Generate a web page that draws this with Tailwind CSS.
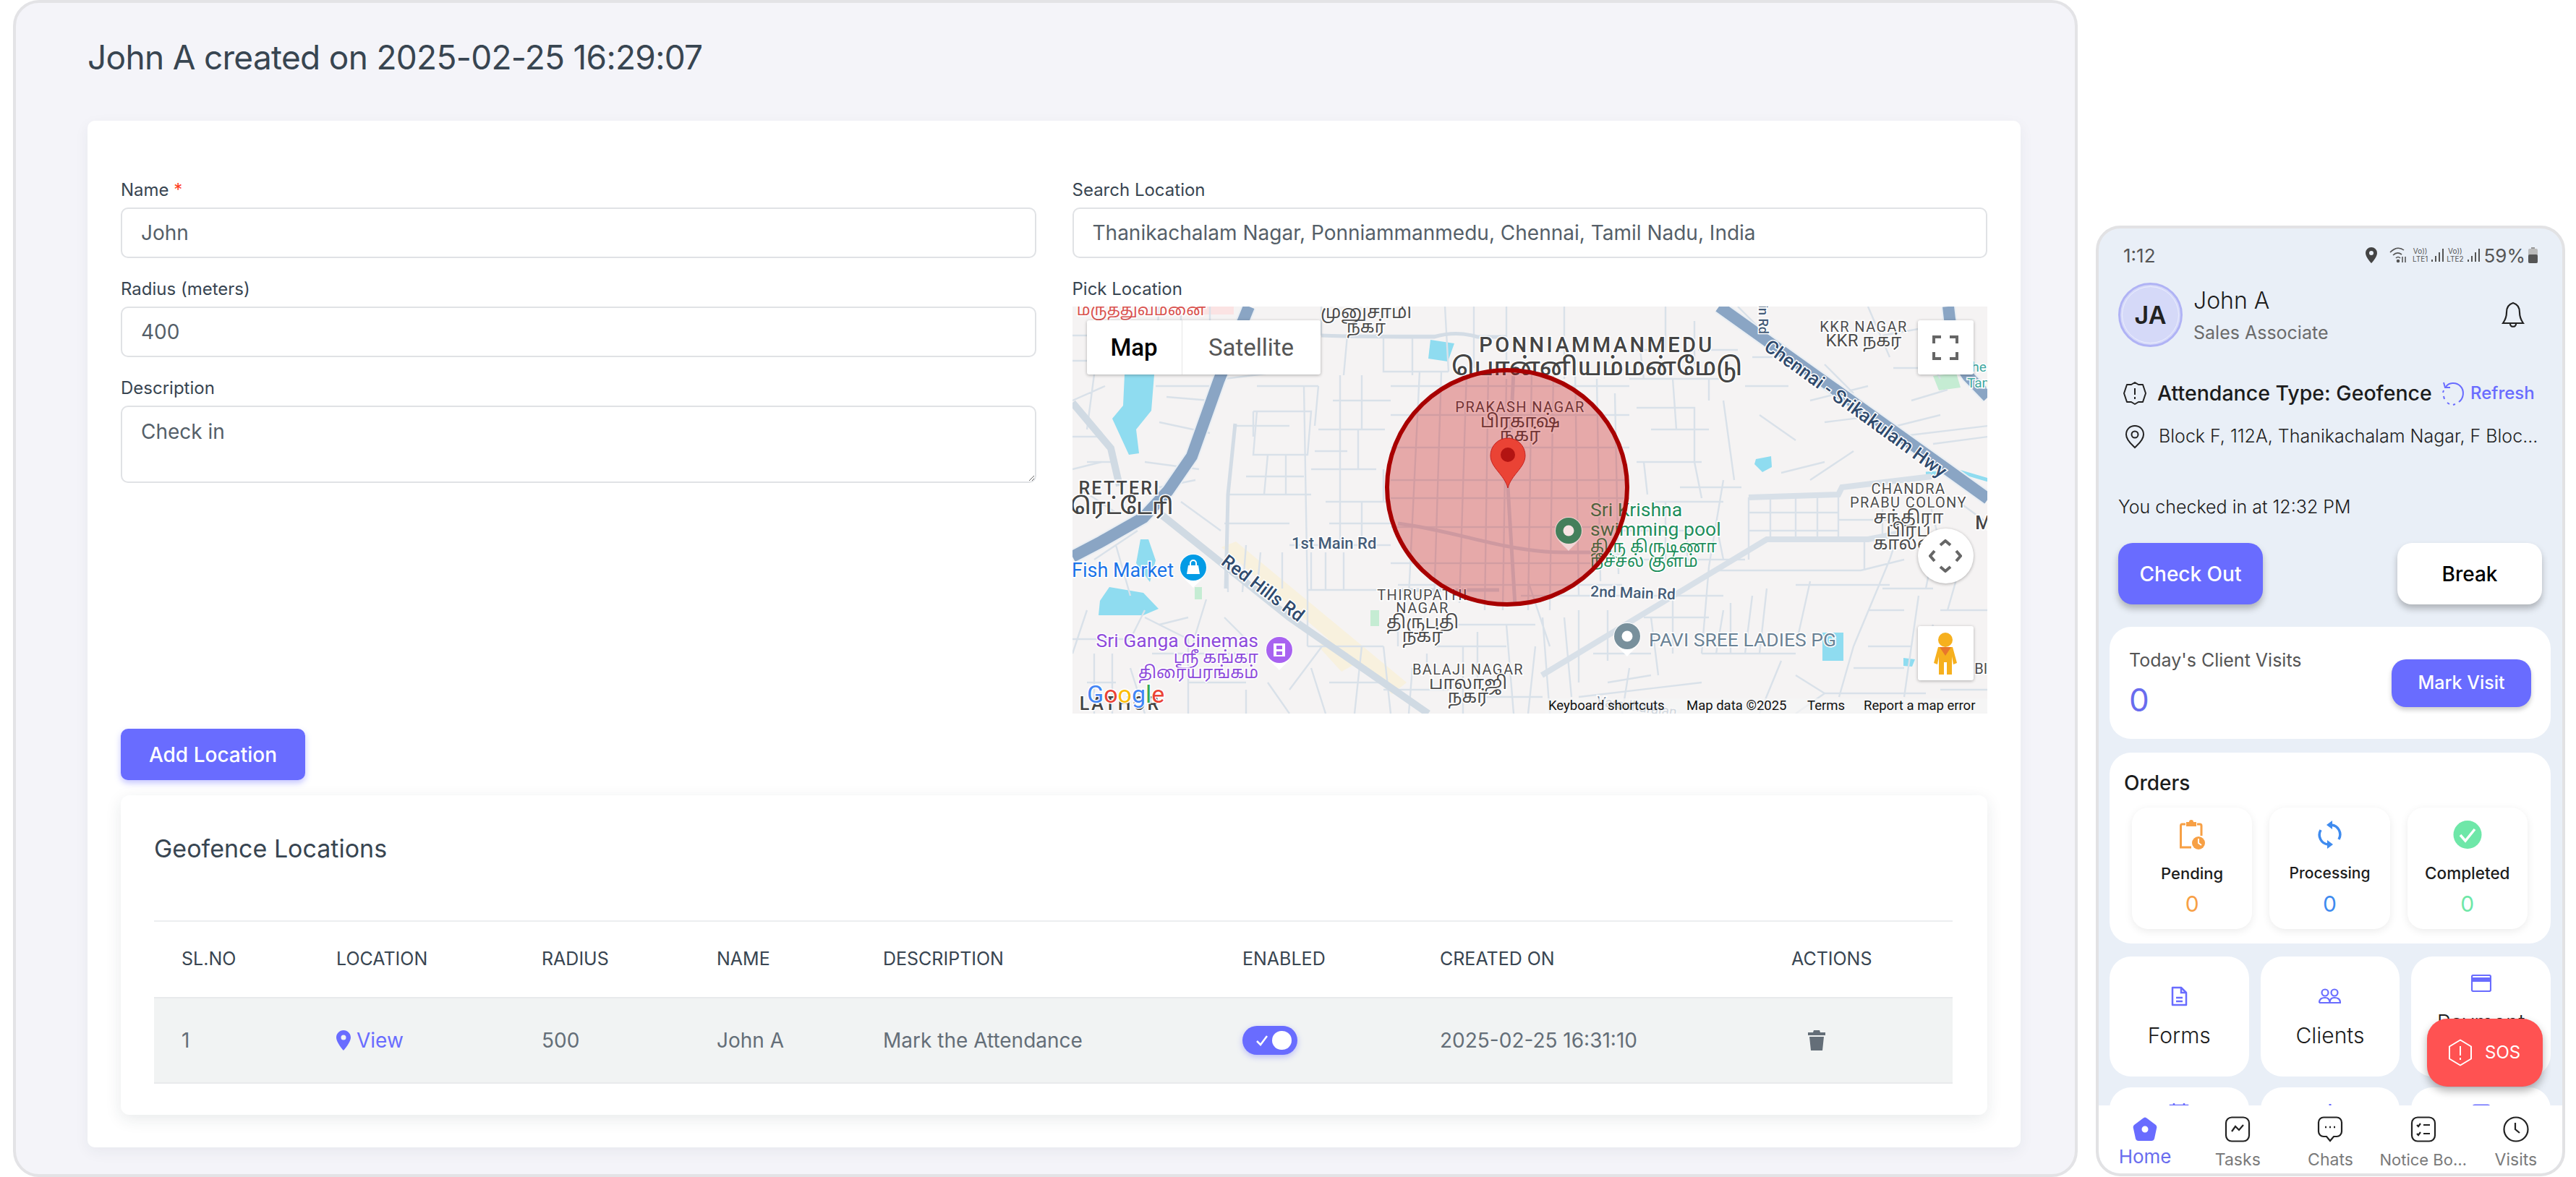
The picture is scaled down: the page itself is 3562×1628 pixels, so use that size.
<!DOCTYPE html>
<html lang="en">
<head>
<meta charset="UTF-8">
<title>Geofence Locations</title>
<script src="https://cdn.jsdelivr.net/npm/@tailwindcss/browser@4"></script>
</head>
<body class="bg-white">
<div class="flex w-[3562px] h-[1628px] overflow-hidden font-['Inter',sans-serif]">

  <!-- web panel -->
  <div class="ml-[18px] w-[2855px] h-[1628px] shrink-0 rounded-[36px] border-4 border-[#e3e3e6] bg-[#f4f4f9] pl-[99px] pr-[75px] text-[#384551]">
    <h1 class="h-[163px] pt-[46px] text-[46px] leading-[58px] font-normal tracking-[-0.7px]">John A created on 2025-02-25 16:29:07</h1>
    <div class="rounded-[10px] bg-white px-[46px] pt-[80px] pb-[45px] shadow-[0_6px_20px_rgba(34,48,62,0.06)]">
      <div class="grid grid-cols-2 gap-x-[50px]">
        <div>
          <label class="block h-[30px] pt-[1px] text-[24px] leading-[30px]">Name <span class="text-[#ff3e1d]">*</span></label>
          <div class="mt-[10px] h-[70px] rounded-[10px] border-2 border-[#e0e2e5] pl-[26px] text-[28px] leading-[66px] text-[#555f69]">John</div>
          <label class="block mt-[27px] h-[30px] pt-[1px] text-[24px] leading-[30px]">Radius (meters)</label>
          <div class="mt-[10px] h-[70px] rounded-[10px] border-2 border-[#e0e2e5] pl-[26px] text-[28px] leading-[66px] text-[#555f69]">400</div>
          <label class="block mt-[27px] h-[30px] pt-[1px] text-[24px] leading-[30px]">Description</label>
          <textarea class="block mt-[10px] w-full h-[107px] rounded-[10px] border-2 border-[#e0e2e5] pl-[26px] pt-[14px] text-[28px] leading-[40px] text-[#555f69]">Check in</textarea>
        </div>
        <div>
          <label class="block h-[30px] pt-[1px] text-[24px] leading-[30px]">Search Location</label>
          <div class="mt-[10px] h-[70px] rounded-[10px] border-2 border-[#e0e2e5] pl-[26px] text-[28px] leading-[66px] text-[#555f69]">Thanikachalam Nagar, Ponniammanmedu, Chennai, Tamil Nadu, India</div>
          <label class="block mt-[27px] h-[30px] pt-[1px] text-[24px] leading-[30px]">Pick Location</label>

          <!-- map -->
          <div class="relative mt-[10px] h-[563px] overflow-hidden bg-[#f5f3f3] font-['Roboto',sans-serif]">
            <svg class="absolute inset-0" width="1266" height="563" viewBox="0 0 1266 563" font-family="Roboto, 'Noto Sans', 'Noto Sans Tamil', sans-serif">
              <rect x="181" y="0" width="42" height="11" fill="#fbe3e3"/>
              <!-- water -->
              <g fill="#8fdcf0">
                <path d="M72 94H113L109 144 88 170 92 203 78 205 55 155 70 137Z"/>
                <path d="M38 407L51 388 98 396 119 418 98 427H36Z"/>
                <path d="M495 46L528 51 519 76 492 72Z"/>
                <path d="M945 211L966 207 967 222 954 229 943 218Z"/>
                <path d="M1037 451H1066V490H1037Z"/>
                <path d="M1149 486L1165 488 1161 498 1149 497Z"/>
                <path d="M94 322H105L115 351 107 381 88 355Z"/>
                <path d="M1180 231L1229 229 1266 240" fill="none" stroke="#8fdcf0" stroke-width="5"/>
              </g>
              <rect x="412" y="420" width="12" height="22" fill="#c5ecd3"/>
              <rect x="169" y="388" width="10" height="17" fill="#c5ecd3"/>
              <path d="M1190 96L1222 92 1228 112 1198 116Z" fill="#c5ecd3"/>
              <path d="M206 333L226 325 462 520 442 536Z" fill="#f8f1de"/>
              <path d="M340 470L362 455 395 492 372 505Z" fill="#f8f1de"/>
              <!-- small streets -->
              <path fill="none" stroke="#d9e1e9" stroke-width="2.4" d="M0 40H60M120 0L112 92M30 94L20 170M0 130L45 110M115 110H210M120 160L190 175M100 215L175 225M20 215H60M15 255L60 285M255 110H340M250 145H330L325 205H250L255 145M222 165H300M215 260H330M210 300H300M320 110L325 400M370 95V330M340 170H432M330 225H420M350 270H440M300 330H440M215 370V395M290 340V390M330 340V392M350 340V392M375 340V392M325 392H430M325 392V470M344 40H510M344 0V40M420 40L430 0M380 40L375 95M430 40V90H520M470 40V95M520 90L515 0M555 0V85M210 100L290 90M150 270L205 310M60 330L80 400M30 350L90 310M0 460H80L100 420M20 420L0 480M30 480V563M100 430L160 460V563M160 480H250M160 520H240M240 530V563M185 405L165 470M345 470L300 530M325 470H430M400 470L390 563M430 470L440 563M500 470H600M520 440H640M540 470V563M600 440L610 563M650 430L660 563M620 400H770M700 420V520M740 420V490M770 100H900M780 140H860V215M800 170H880M840 250H925M780 215H870M820 0V60M860 20V80M900 130L915 240M935 264V350M965 264V325M1000 262V322M1030 262V322M1059 260V320M935 285H1059M935 310H1059M900 240L880 360M800 270H900M760 310H880M770 350H930M800 400H900M880 360L870 480M890 365H1090M1090 365L1150 350M1020 380L1000 470M1000 385H1130M1130 350L1080 470M980 490L950 563M870 480H1000M1000 510L1040 535 1000 563M1040 535H1180M1080 470L1060 540M1120 390H1190M1170 400L1150 540M1200 420H1266M1020 130L1100 110M1140 180L1266 165M1190 190L1266 180M1170 45L1200 100M1040 80L1080 120M1080 200L1020 240M1100 0L1130 70M920 0L960 40M1120 40L1230 20M680 100V0M600 0V90M630 380L660 470M560 540H650M700 540L870 520M430 530H520M450 430V470M1120 280V320M1060 295H1160M1180 250L1200 330M1225 270L1266 300"/>
              <path fill="none" stroke="#d9e1e9" stroke-width="2.4" d="M0 75H50M40 50V90M130 40H235M150 0V40M190 0V40M130 75H210M130 125L190 130M0 180H45M0 225L40 215M120 250L170 240M250 180V145M270 205L265 260M295 205V260M240 235H320M340 110L335 165M400 95V170M395 170V225M430 225V270M400 270V330M360 130H440M335 200H380M355 300H440M240 330L235 395M260 340L255 395M210 430L240 460M120 440L160 430M110 480H155M55 480V563M80 500L100 563M20 520H60M270 520L300 563M330 500L350 563M355 520H430M470 500L465 563M490 480V500M560 450V520M640 470L630 563M680 430L690 540M720 480H800M770 500L760 563M800 430L810 510M830 400V480M790 430H880M740 520L800 510M900 420L890 480M910 410V480M940 400L930 480M960 390L950 480M780 60H820M790 100L785 60M830 100L835 170M865 60H920M880 100V130M940 70H980M930 110H990M950 150L1000 185M980 230L1040 215M790 215L795 260M860 215L870 265M890 300L900 350M820 270V350M850 310V350M1095 320V365M1140 320L1130 350M1190 340L1180 390M1230 350L1210 420M1100 420H1150M1100 470H1160M1080 500H1150M1190 440L1170 500M1200 530H1266M1135 85H1190M1160 130L1210 115M1120 170L1200 150M1040 160L1120 150"/>
              <path fill="none" stroke="#d9e1e9" stroke-width="2.4" d="M440 110H770M440 150H770M440 195H770M440 240H770M440 265H770M440 305H770M440 355H770M450 385H760M480 90L465 400M510 90L500 410M545 90L535 410M575 90L570 420M600 100L595 420M635 90L630 420M665 90L660 420M695 90L700 400M725 100L730 380M750 120L755 370"/>
              <path fill="none" stroke="#d3dce5" stroke-width="5" d="M225 162L215 260 212 390M344 40C400 42 470 42 500 42 520 36 540 36 560 42H600M610 90L602 250 612 414M450 300C530 310 600 340 680 340H760M450 392H590"/>
              <!-- main roads -->
              <path fill="none" stroke="#d0dae3" stroke-width="10" d="M123 288L300 430 492 563M0 133L53 196 65 248"/>
              <path fill="none" stroke="#d8e0e8" stroke-width="8" d="M649 510L960 322H1100L1146 313M935 264L1059 260 1064 250 1188 235"/>
              <g fill="none">
                <path stroke="#e9eef3" stroke-width="20" d="M244 0L202 103 165 207 132 255 98 292 40 325 0 346M894 0L1209 225 1266 266M1211 0C1215 40 1222 75 1238 96L1266 125"/>
                <path stroke="#8aa5c4" stroke-width="16" d="M244 0L202 103 165 207 132 255 98 292 40 325 0 346M894 0L1209 225 1266 266M1211 0C1215 40 1222 75 1238 96L1266 125"/>
              </g>
              <!-- labels -->
              <g text-anchor="middle" fill="#4d4d4d" stroke="#fff" stroke-width="3" paint-order="stroke" font-size="20" letter-spacing="1.4">
                <text x="95" y="12" fill="#d9534f" font-size="22" letter-spacing="0">மருத்துவமனை</text>
                <text x="406" y="16" font-size="25" letter-spacing="0">முனுசாமி</text>
                <text x="406" y="36" font-size="24" letter-spacing="0">நகர்</text>
                <text x="725" y="63" font-size="29" font-weight="500" letter-spacing="3.4" fill="#444">PONNIAMMANMEDU</text>
                <text x="725" y="95" font-size="34" font-weight="500" letter-spacing="0" fill="#444">பொன்னியம்மன்மேடு</text>
                <text x="619" y="146">PRAKASH NAGAR</text>
                <text x="619" y="167" font-size="25" letter-spacing="0">பிரகாஷ்</text>
                <text x="619" y="186" font-size="25" letter-spacing="0">நகர்</text>
                <text x="1094" y="35">KKR NAGAR</text>
                <text x="1094" y="55" font-size="24" letter-spacing="0">KKR நகர்</text>
                <text x="65" y="260" font-size="25" font-weight="500" letter-spacing="2.2" fill="#444">RETTERI</text>
                <text x="68" y="287" font-size="31" font-weight="500" letter-spacing="0" fill="#444">ரெட்டேரி</text>
                <text x="484" y="406">THIRUPATHI</text>
                <text x="484" y="424">NAGAR</text>
                <text x="484" y="445" font-size="25" letter-spacing="0">திருபதி</text>
                <text x="484" y="464" font-size="25" letter-spacing="0">நகர்</text>
                <text x="547" y="509">BALAJI NAGAR</text>
                <text x="547" y="529" font-size="25" letter-spacing="0">பாலாஜி</text>
                <text x="547" y="548" font-size="25" letter-spacing="0">நகர்</text>
                <text x="1156" y="259">CHANDRA</text>
                <text x="1156" y="278">PRABU COLONY</text>
                <text x="1156" y="300" font-size="25" letter-spacing="0">சந்திரா</text>
                <text x="1156" y="318" font-size="25" letter-spacing="0">பிரபு</text>
                <text x="1156" y="336" font-size="25" letter-spacing="0">காலனி</text>
                <text x="66" y="558" font-size="25" font-weight="500" letter-spacing="3" fill="#444">LATHOR</text>
                <text x="1260" y="308" font-size="25" font-weight="500" fill="#444">M</text>
                <text x="1262" y="508" letter-spacing="0">BIY</text>
              </g>
              <g fill="#445c78" stroke="#fff" stroke-width="3" paint-order="stroke" font-weight="500">
                <text x="303" y="335" font-size="22">1st Main Rd</text>
                <text x="716" y="401" font-size="21" transform="rotate(2 716 400)">2nd Main Rd</text>
                <text x="263" y="398" text-anchor="middle" font-size="25" fill="#2f4a6d" transform="rotate(37 263 390)">Red Hills Rd</text>
                <text x="1083" y="150" text-anchor="middle" font-size="26" fill="#2f4a6d" transform="rotate(36 1083 141)">Chennai - Srikakulam Hwy</text>
                <text x="999" y="44" text-anchor="start" font-size="18" transform="rotate(90 999 0) translate(-28 6)">Main Rd</text>
                <text x="724" y="552" font-size="19" fill="#7a8da3" font-weight="400" transform="rotate(8 724 552)">Varadharajan</text>
              </g>
              <g stroke="#fff" stroke-width="3" paint-order="stroke" font-size="27">
                <text x="-1" y="374" fill="#1a73e8">Fish Market</text>
                <text x="257" y="471" text-anchor="end" fill="#8e4bdb" font-size="26.5">Sri Ganga Cinemas</text>
                <text x="257" y="493" text-anchor="end" fill="#8e4bdb" font-size="23">ஸ்ரீ கங்கா</text>
                <text x="257" y="514" text-anchor="end" fill="#8e4bdb" font-size="23">திரையரங்கம்</text>
                <text x="716" y="290" fill="#1e8e5c" font-size="26.5">Sri Krishna</text>
                <text x="716" y="317" fill="#1e8e5c" font-size="26.5">swimming pool</text>
                <text x="716" y="340" fill="#1e8e5c" font-size="23">திரு கிருடிணா</text>
                <text x="716" y="360" fill="#1e8e5c" font-size="23">நீச்சல் குளம்</text>
                <text x="797" y="470" fill="#6a8295" font-size="26.5">PAVI SREE LADIES PG</text>
                <text x="1237" y="90" fill="#3fa7a0" font-size="19">the</text>
                <text x="1237" y="112" fill="#3fa7a0" font-size="19">Tank</text>
              </g>
              <!-- poi pins -->
              <path d="M148 361a19 19 0 1 1 38 0c0 12-12 20-19 28-7-8-19-16-19-28Z" fill="#fff"/>
              <circle cx="167" cy="361" r="18" fill="#039be5"/>
              <path d="M160 358h14l2 12h-18Z" fill="#fff"/><path d="M163 358v-3a4 4 0 0 1 8 0v3" fill="none" stroke="#fff" stroke-width="2"/>
              <path d="M267 475a19 19 0 1 1 38 0c0 12-12 20-19 28-7-8-19-16-19-28Z" fill="#fff"/>
              <circle cx="286" cy="475" r="18" fill="#a862f0"/>
              <rect x="278" y="466" width="16" height="18" fill="#fff"/><rect x="282" y="469" width="8" height="5" fill="#a862f0"/><rect x="282" y="477" width="8" height="5" fill="#a862f0"/>
              <path d="M748 456a19 19 0 1 1 38 0c0 12-12 20-19 28-7-8-19-16-19-28Z" fill="#fff"/>
              <circle cx="767" cy="456" r="18" fill="#78909c"/><circle cx="767" cy="456" r="7.5" fill="#fff"/>
              <!-- geofence circle -->
              <ellipse cx="601" cy="250" rx="166" ry="162" fill="#c40000" fill-opacity="0.3" stroke="#a80000" stroke-width="6"/>
              <path d="M667 310a19 19 0 1 1 38 0c0 12-12 20-19 28-7-8-19-16-19-28Z" fill="#f2d6d6"/>
              <circle cx="686" cy="310" r="18" fill="#447f5b"/><circle cx="686" cy="310" r="7.5" fill="#f8e4e4"/>
              <path d="M578 206a24 24 0 1 1 48 0c0 17-19 26-24 45-5-19-24-28-24-45Z" fill="#ea4335" stroke="#c5221f" stroke-width="1"/>
              <circle cx="602" cy="205" r="10" fill="#b31412"/>
              <text x="20" y="548" font-family="Roboto, sans-serif" font-size="34" stroke="#fff" stroke-width="3" paint-order="stroke"><tspan fill="#4285f4">G</tspan><tspan fill="#ea4335">o</tspan><tspan fill="#fbbc05">o</tspan><tspan fill="#4285f4">g</tspan><tspan fill="#34a853">l</tspan><tspan fill="#ea4335">e</tspan></text>
            </svg>

            <!-- map controls -->
            <div class="absolute left-[20px] top-[19px] flex h-[75px] w-[323px] rounded-[3px] bg-white text-[33px] shadow-[0_1px_4px_rgba(0,0,0,0.3)]">
              <div class="flex w-[132px] items-center justify-center border-r border-[#e6e6e6] font-medium text-black">Map</div>
              <div class="flex flex-1 items-center justify-center text-[#565656]">Satellite</div>
            </div>
            <div class="absolute left-[1169px] top-[19px] flex h-[75px] w-[77px] items-center justify-center rounded-[3px] bg-white shadow-[0_1px_4px_rgba(0,0,0,0.3)]">
              <svg width="36" height="34" viewBox="0 0 36 34" fill="none" stroke="#666" stroke-width="4"><path d="M2 11V2H12M24 2H34V11M34 23V32H24M12 32H2V23"/></svg>
            </div>
            <div class="absolute left-[1169px] top-[307px] flex h-[76px] w-[77px] items-center justify-center rounded-full bg-white shadow-[0_1px_4px_rgba(0,0,0,0.3)]">
              <svg width="46" height="46" viewBox="0 0 46 46" fill="none" stroke="#666" stroke-width="4"><path d="M16 8L23 2 30 8M16 38L23 44 30 38M8 16L2 23 8 30M38 16L44 23 38 30"/></svg>
            </div>
            <div class="absolute left-[1169px] top-[442px] flex h-[75px] w-[77px] items-center justify-center rounded-[3px] bg-white shadow-[0_1px_4px_rgba(0,0,0,0.3)]">
              <svg width="34" height="60" viewBox="0 0 34 60"><circle cx="17" cy="11" r="10" fill="#f6b01e"/><path d="M7 21H27L33 43 28 45 26 34V59H19V42H15V59H8V34L6 45 1 43Z" fill="#f6b01e"/><path d="M9 21H25L17 33Z" fill="#e8762c"/></svg>
            </div>
            <div class="absolute bottom-0 right-0 flex h-[21px] w-[611px] items-center bg-[#f5f5f5]/70 pl-[4px] text-[18.5px] text-[#111]">
              <span class="w-[191px]">Keyboard shortcuts</span><span class="w-[167px]">Map data ©2025</span><span class="w-[78px]">Terms</span><span>Report a map error</span>
            </div>
          </div>
        </div>
      </div>

      <button class="mt-[21px] block h-[71px] w-[255px] rounded-[10px] bg-[#696cff] text-[28px] font-medium text-white shadow-[0_4px_8px_rgba(105,108,255,0.4)]">Add Location</button>

      <div class="mt-[21px] h-[442px] rounded-[12px] bg-white px-[46px] pt-[54px] shadow-[0_6px_22px_rgba(34,48,62,0.1)]">
        <h2 class="h-[40px] text-[34px] leading-[40px] font-normal">Geofence Locations</h2>
        <table class="mt-[79px] w-[2487px] table-fixed border-t-2 border-[#eceef0] text-left">
          <colgroup>
            <col class="w-[214px]"><col class="w-[284px]"><col class="w-[242px]"><col class="w-[230px]"><col class="w-[497px]"><col class="w-[273px]"><col class="w-[486px]"><col class="w-[261px]">
          </colgroup>
          <thead>
            <tr class="h-[106px] text-[25px] font-normal uppercase">
              <th class="pl-[38px] font-normal">SL.NO</th><th class="pl-[38px] font-normal">Location</th><th class="pl-[38px] font-normal">Radius</th><th class="pl-[38px] font-normal">Name</th><th class="pl-[38px] font-normal">Description</th><th class="pl-[38px] font-normal">Enabled</th><th class="pl-[38px] font-normal">Created On</th><th class="pl-[38px] font-normal">Actions</th>
            </tr>
          </thead>
          <tbody>
            <tr class="h-[118px] border-y-2 border-[#e8eaec] bg-[#f1f3f3] text-[28px] text-[#646e78]">
              <td class="pl-[38px]">1</td>
              <td class="pl-[38px]">
                <span class="flex items-center gap-[8px] text-[#696cff]">
                  <svg width="20" height="28" viewBox="0 0 20 28"><path fill-rule="evenodd" d="M10 0C4.5 0 0 4.5 0 10c0 7 10 18 10 18s10-11 10-18C20 4.5 15.5 0 10 0Zm0 13.5a3.5 3.5 0 1 1 0-7 3.5 3.5 0 0 1 0 7Z" fill="#696cff"/></svg>View
                </span>
              </td>
              <td class="pl-[38px]">500</td>
              <td class="pl-[38px]">John A</td>
              <td class="pl-[38px]">Mark the Attendance</td>
              <td class="pl-[38px]">
                <span class="relative block h-[40px] w-[76px] rounded-full bg-[#696cff] shadow-[0_3px_8px_rgba(105,108,255,0.4)]">
                  <svg class="absolute left-[18px] top-[12px]" width="18" height="16" viewBox="0 0 18 16" fill="none" stroke="#fff" stroke-width="2.5"><path d="M2 9L7 14 16 2"/></svg>
                  <span class="absolute left-[41px] top-[7px] h-[26px] w-[27px] rounded-full bg-white"></span>
                </span>
              </td>
              <td class="pl-[38px]">2025-02-25 16:31:10</td>
              <td class="pl-[60px]">
                <svg class="block" width="26" height="28" viewBox="0 0 26 28" fill="#646e78"><path d="M9 0H17L18 3H25V7H1V3H8ZM3 9H23L21 28H5Z"/></svg>
              </td>
            </tr>
          </tbody>
        </table>
      </div>
    </div>
  </div>

  <!-- phone -->
  <div class="relative ml-[25px] mt-[312px] flex h-[1315px] w-[649px] shrink-0 flex-col overflow-hidden rounded-[34px] border-4 border-[#e2e2e4] bg-[#e9eff7] text-[#1c1c1c]">
    <div class="h-[1213px] overflow-hidden">
      <!-- status bar -->
      <div class="flex h-[70px] items-center justify-between px-[34px] pt-[4px] text-[26px] text-[#555]">
        <span>1:12</span>
        <span class="flex items-center gap-[4px]">
          <svg width="18" height="24" viewBox="0 0 18 24" class="mr-[12px]"><path fill-rule="evenodd" d="M9 1a8 8 0 0 0-8 8c0 6 8 14 8 14s8-8 8-14a8 8 0 0 0-8-8Zm0 11a3 3 0 1 1 0-6 3 3 0 0 1 0 6Z" fill="#444"/></svg>
          <svg width="28" height="24" viewBox="0 0 28 24" fill="none" stroke="#555" stroke-width="1.6"><path d="M1 8C8 1 15 1 20 5M5 12C9 8 13 8 17 11M9 16C11 14 13 14 15 16"/><circle cx="12" cy="20" r="1.5" fill="#555"/><path d="M18 22V14M22 14V22"/></svg>
          <span class="block text-center text-[10px] leading-[11px]">Vo))<br>LTE1</span>
          <svg width="18" height="22" viewBox="0 0 18 22" fill="#555"><rect x="1" y="17" width="2" height="3"/><rect x="6" y="12" width="2" height="8"/><rect x="11" y="7" width="2" height="13"/><rect x="16" y="2" width="2" height="18"/></svg>
          <span class="block text-center text-[10px] leading-[11px]">Vo))<br>LTE2</span>
          <svg width="18" height="22" viewBox="0 0 18 22" fill="#555"><rect x="1" y="17" width="2" height="3"/><rect x="6" y="12" width="2" height="8"/><rect x="11" y="7" width="2" height="13"/><rect x="16" y="2" width="2" height="18"/></svg>
          <span class="ml-[2px]">59%</span>
          <svg width="13" height="22" viewBox="0 0 13 22"><rect x="4" y="0" width="5" height="3" fill="#999"/><rect x="0" y="2" width="13" height="20" rx="2" fill="#bbb"/><rect x="0" y="10" width="13" height="12" rx="2" fill="#555"/></svg>
        </span>
      </div>

      <!-- profile -->
      <div class="mt-[5px] flex items-center justify-between pl-[27px] pr-[52px]">
        <div class="flex items-center gap-[15px]">
          <div class="flex h-[89px] w-[89px] items-center justify-center rounded-full border-[3px] border-[#b0b3f5] bg-[#d5d9f8] text-[34px] font-semibold text-[#222] outline-1 outline-offset-[-6px] outline-[#eceeff]">JA</div>
          <div>
            <div class="h-[46px] text-[32px] leading-[46px] font-light">John A</div>
            <div class="mt-[3px] text-[25px] leading-[36px] text-[#6b6b6b]">Sales Associate</div>
          </div>
        </div>
        <svg width="32" height="38" viewBox="0 0 32 38" fill="none" stroke="#222" stroke-width="2.2"><path d="M16 2C9 4 7 9 7 15C7 23 4 27 2 30H30C28 27 25 23 25 15C25 9 23 4 16 2Z"/><path d="M12 31C12 36 20 36 20 31"/></svg>
      </div>

      <!-- attendance -->
      <div class="mt-[46px] flex h-[36px] items-center pl-[34px]">
        <svg width="32" height="34" viewBox="0 0 32 34" fill="none" stroke="#222" stroke-width="2"><path d="M16 2L21 5 27 5 29 11 31 17 29 23 27 29 21 29 16 32 11 29 5 29 3 23 1 17 3 11 5 5 11 5Z" stroke-linejoin="round"/><path d="M16 10V19M16 22V25"/></svg>
        <span class="ml-[15px] w-[393px] text-[28.5px] font-medium">Attendance Type: Geofence</span>
        <svg width="32" height="36" viewBox="0 0 32 36" fill="none" stroke="#696cff" stroke-width="2"><path d="M6 9C10 3 20 2 26 8C32 14 31 25 24 30" /><path d="M19 33L16 34M11 33L8 31M4 26L3 22M2 17L3 14"/><path d="M3 3L5 10 12 10"/></svg>
        <span class="ml-[8px] text-[24px] font-medium text-[#696cff]">Refresh</span>
      </div>
      <div class="mt-[24px] flex h-[36px] items-center pl-[36px]">
        <svg width="28" height="34" viewBox="0 0 28 34" fill="none" stroke="#222" stroke-width="2"><path d="M14 2C7 2 2 7 2 14C2 22 10 28 14 32C18 28 26 22 26 14C26 7 21 2 14 2Z"/><circle cx="14" cy="14" r="4.5"/></svg>
        <span class="ml-[19px] text-[25px] font-light text-[#222]">Block F, 112A, Thanikachalam Nagar, F Bloc...</span>
      </div>

      <div class="mt-[63px] h-[32px] pl-[27px] text-[25px] leading-[32px] font-light">You checked in at 12:32 PM</div>

      <div class="mt-[34px] flex justify-between pl-[27px] pr-[28px]">
        <button class="h-[85px] w-[200px] rounded-[20px] bg-[#696cff] text-[28px] font-medium text-white shadow-[0_6px_10px_rgba(0,0,0,0.25)]">Check Out</button>
        <button class="h-[85px] w-[200px] rounded-[20px] bg-white text-[28px] font-medium text-black shadow-[0_6px_10px_rgba(0,0,0,0.25)]">Break</button>
      </div>

      <!-- client visits -->
      <div class="ml-[15px] mr-[16px] mt-[31px] flex h-[155px] justify-between rounded-[30px] bg-white pl-[27px] pr-[27px] pt-[28px]">
        <div>
          <div class="text-[25px] leading-[36px] text-[#555]">Today's Client Visits</div>
          <div class="mt-[14px] text-[44px] leading-[46px] text-[#696cee]">0</div>
        </div>
        <button class="mt-[17px] h-[66px] w-[193px] rounded-[20px] bg-[#696cff] text-[25px] font-medium text-white shadow-[0_4px_6px_rgba(0,0,0,0.2)]">Mark Visit</button>
      </div>

      <!-- orders -->
      <div class="ml-[15px] mr-[16px] mt-[19px] h-[264px] rounded-[30px] bg-white pl-[20px] pr-[32px] pt-[25px]">
        <div class="h-[34px] text-[28px] leading-[34px] font-medium">Orders</div>
        <div class="ml-[11px] mt-[17px] grid grid-cols-3 gap-x-[24px]">
          <div class="flex h-[168px] flex-col items-center rounded-[22px] bg-white pt-[17px] shadow-[0_3px_12px_rgba(0,0,0,0.08)]">
            <svg width="35" height="41" viewBox="0 0 35 41" fill="none"><path d="M8 6H3A2 2 0 0 0 1.5 8V38H16M24 6H28A2 2 0 0 1 30 8V22" stroke="#f7a045" stroke-width="3"/><path d="M9 3H13A3 3 0 0 1 19 3H23V9H9Z" fill="#f7a045"/><circle cx="26" cy="32" r="9" fill="#f7a045"/><path d="M26 26V32L30 35" stroke="#fff" stroke-width="2"/></svg>
            <div class="mt-[18px] text-[22px] leading-[30px] font-medium">Pending</div>
            <div class="mt-[9px] text-[30px] leading-[36px] text-[#f7a045]">0</div>
          </div>
          <div class="flex h-[168px] flex-col items-center rounded-[22px] bg-white pt-[17px] shadow-[0_3px_12px_rgba(0,0,0,0.08)]">
            <svg width="33" height="41" viewBox="0 0 33 41" fill="none" stroke="#3f8bef" stroke-width="3.5"><path d="M19 7C28 8 34 18 29 27"/><path d="M14 34C5 33 -1 23 4 14"/><path d="M20 1V13L12 7Z" fill="#3f8bef" stroke="none"/><path d="M13 40V28L21 34Z" fill="#3f8bef" stroke="none"/></svg>
            <div class="mt-[18px] text-[21px] leading-[30px] font-medium">Processing</div>
            <div class="mt-[9px] text-[30px] leading-[36px] text-[#3f8bef]">0</div>
          </div>
          <div class="flex h-[168px] flex-col items-center rounded-[22px] bg-white pt-[17px] shadow-[0_3px_12px_rgba(0,0,0,0.08)]">
            <svg width="40" height="41" viewBox="0 0 40 41"><circle cx="20" cy="20.5" r="19.5" fill="#6ee7a8"/><path d="M10 21L17 29 30 13" fill="none" stroke="#fff" stroke-width="3.5"/></svg>
            <div class="mt-[18px] text-[22.5px] leading-[30px] font-medium">Completed</div>
            <div class="mt-[9px] text-[30px] leading-[36px] text-[#6ee7a8]">0</div>
          </div>
        </div>
      </div>

      <!-- shortcuts -->
      <div class="ml-[15px] mr-[16px] mt-[18px] grid grid-cols-3 gap-x-[16px] gap-y-[15px]">
        <div class="flex h-[166px] flex-col items-center rounded-[30px] bg-white pt-[41px]">
          <svg width="23" height="28" viewBox="0 0 23 28" fill="none" stroke="#696cff" stroke-width="2.5"><path d="M2 2H14L21 9V26H2Z" stroke-linejoin="round"/><path d="M14 2V9H21M7 16H16M7 21H16"/></svg>
          <div class="mt-[22px] text-[30px] leading-[36px] font-light">Forms</div>
        </div>
        <div class="flex h-[166px] flex-col items-center rounded-[30px] bg-white pt-[44px]">
          <svg width="31" height="22" viewBox="0 0 31 22" fill="none" stroke="#696cff" stroke-width="2.2"><circle cx="9" cy="6" r="4.5"/><circle cx="22" cy="6" r="4.5"/><path d="M1 20C1 14 6 13 9 13C12 13 15.5 14 15.5 20M15.5 20C15.5 14 19 13 22 13C25 13 30 14 30 20ZM1 20H15.5"/></svg>
          <div class="mt-[25px] text-[30px] leading-[36px] font-light">Clients</div>
        </div>
        <div class="flex h-[166px] flex-col items-center rounded-[30px] bg-white pt-[25px]">
          <svg width="28" height="24" viewBox="0 0 28 24"><rect x="1" y="1" width="26" height="22" rx="2" fill="#fff" stroke="#696cff" stroke-width="2.2"/><rect x="1" y="4" width="26" height="6" fill="#696cff"/></svg>
          <div class="mt-[24px] text-[30px] leading-[36px] font-light">Payment</div>
        </div>
        <div class="flex h-[166px] flex-col items-center rounded-[30px] bg-white pt-[22px]">
          <svg width="28" height="26" viewBox="0 0 28 26" fill="none" stroke="#696cff" stroke-width="2.5"><path d="M7 0V5M21 0V5"/><rect x="2" y="3" width="24" height="22"/></svg>
        </div>
        <div class="flex h-[166px] flex-col items-center rounded-[30px] bg-white pt-[23px]">
          <svg width="24" height="24" viewBox="0 0 24 24" fill="#696cff"><rect x="10.5" y="0" width="3" height="14"/></svg>
        </div>
        <div class="flex h-[166px] flex-col items-center rounded-[30px] bg-white pt-[23px]">
          <svg width="26" height="24" viewBox="0 0 26 24" fill="none" stroke="#696cff" stroke-width="3"><rect x="2" y="2" width="22" height="20" rx="2"/></svg>
        </div>
      </div>
    </div>

    <!-- bottom nav -->
    <div class="grid flex-1 grid-cols-5 rounded-b-[30px] bg-white text-[23px] text-[#7a7a7a]">
      <div class="flex flex-col items-center pt-[16px]">
        <svg width="34" height="34" viewBox="0 0 34 34"><path fill-rule="evenodd" d="M14 2Q17 -1 20 2L32 11Q34 13 33 16L30 30Q29 33 26 33H8Q5 33 4 30L1 16Q0 13 2 11ZM17 12.5a4.5 4.5 0 1 0 0 9 4.5 4.5 0 0 0 0-9Z" fill="#696cff"/></svg>
        <span class="mt-[5px] text-[26px] leading-[32px] text-[#696cee]">Home</span>
      </div>
      <div class="flex flex-col items-center pt-[15px]">
        <svg width="36" height="36" viewBox="0 0 36 36" fill="none" stroke="#222" stroke-width="2.2"><rect x="2" y="1.5" width="32" height="33" rx="8"/><path d="M10 21L15 14 20 19 26 12"/></svg>
        <span class="mt-[9px] leading-[30px]">Tasks</span>
      </div>
      <div class="flex flex-col items-center pt-[15px]">
        <svg width="36" height="36" viewBox="0 0 36 36" fill="none" stroke="#222" stroke-width="2.2"><path d="M9 1.5H27A7 7 0 0 1 34 8.5V21A7 7 0 0 1 27 28H23L18 34 13 28H9A7 7 0 0 1 2 21V8.5A7 7 0 0 1 9 1.5Z"/><path d="M11 15H13M17 15H19M23 15H25" stroke-width="2.6"/></svg>
        <span class="mt-[9px] leading-[30px]">Chats</span>
      </div>
      <div class="flex flex-col items-center pt-[15px]">
        <svg width="36" height="36" viewBox="0 0 36 36" fill="none" stroke="#222" stroke-width="2.2"><rect x="2" y="1.5" width="32" height="33" rx="8"/><path d="M9 12L11 14 14 10M9 24L11 26 14 22M18 12H27M18 24H27"/></svg>
        <span class="mt-[9px] text-[22px] leading-[30px]">Notice Bo…</span>
      </div>
      <div class="flex flex-col items-center pt-[15px]">
        <svg width="36" height="36" viewBox="0 0 36 36" fill="none" stroke="#222" stroke-width="2.2"><circle cx="18" cy="18" r="16.5"/><path d="M17 9V18L23 23"/></svg>
        <span class="mt-[9px] leading-[30px]">Visits</span>
      </div>
    </div>

    <!-- SOS floating button -->
    <div class="absolute left-[454px] top-[1093px] flex h-[94px] w-[160px] items-center gap-[17px] rounded-[28px] bg-[#ff5252] pl-[29px] text-[24px] text-white shadow-[0_6px_12px_rgba(0,0,0,0.3)]">
      <svg width="34" height="38" viewBox="0 0 34 38" fill="none" stroke="#fff" stroke-width="2"><path d="M17 1.5L32 10.5V27.5L17 36.5 2 27.5V10.5Z" stroke-linejoin="round"/><path d="M17 10V23M17 26V29"/></svg>
      SOS
    </div>
  </div>
</div>
</body>
</html>
